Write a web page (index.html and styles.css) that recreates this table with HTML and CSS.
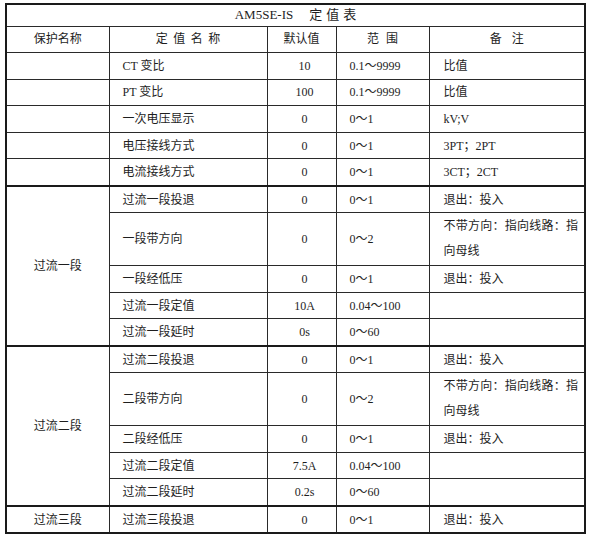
FILE: index.html
```html
<!DOCTYPE html>
<html lang="zh">
<head>
<meta charset="utf-8">
<link rel="stylesheet" href="styles.css">
<title>AM5SE-IS 定值表</title>
</head>
<body>
<table class="sheet">
  <colgroup>
    <col class="c1"><col class="c2"><col class="c3"><col class="c4"><col class="c5">
  </colgroup>
  <tr class="title-row"><td colspan="5" class="title">AM5SE-IS<span class="title-gap"></span><span class="sp-title">定值表</span></td></tr>
  <tr class="head">
    <td class="center">保护名称</td>
    <td class="center"><span class="sp-a">定值名称</span></td>
    <td class="center">默认值</td>
    <td class="center"><span class="sp-b">范围</span></td>
    <td class="center"><span class="sp-c">备注</span></td>
  </tr>
  <tr><td></td><td class="name">CT 变比</td><td class="val">10</td><td class="rng">0.1～9999</td><td class="note">比值</td></tr>
  <tr><td></td><td class="name">PT 变比</td><td class="val">100</td><td class="rng">0.1～9999</td><td class="note">比值</td></tr>
  <tr><td></td><td class="name">一次电压显示</td><td class="val">0</td><td class="rng">0～1</td><td class="note">kV;V</td></tr>
  <tr><td></td><td class="name">电压接线方式</td><td class="val">0</td><td class="rng">0～1</td><td class="note">3PT；2PT</td></tr>
  <tr><td></td><td class="name">电流接线方式</td><td class="val">0</td><td class="rng">0～1</td><td class="note">3CT；2CT</td></tr>

  <tr class="group"><td rowspan="5" class="center">过流一段</td><td class="name">过流一段投退</td><td class="val">0</td><td class="rng">0～1</td><td class="note">退出：投入</td></tr>
  <tr class="tall"><td class="name">一段带方向</td><td class="val">0</td><td class="rng">0～2</td><td class="note wrap">不带方向：指向线路：指向母线</td></tr>
  <tr><td class="name">一段经低压</td><td class="val">0</td><td class="rng">0～1</td><td class="note">退出：投入</td></tr>
  <tr><td class="name">过流一段定值</td><td class="val">10A</td><td class="rng">0.04～100</td><td class="note"></td></tr>
  <tr><td class="name">过流一段延时</td><td class="val">0s</td><td class="rng">0～60</td><td class="note"></td></tr>

  <tr class="group"><td rowspan="5" class="center">过流二段</td><td class="name">过流二段投退</td><td class="val">0</td><td class="rng">0～1</td><td class="note">退出：投入</td></tr>
  <tr class="tall"><td class="name">二段带方向</td><td class="val">0</td><td class="rng">0～2</td><td class="note wrap">不带方向：指向线路：指向母线</td></tr>
  <tr><td class="name">二段经低压</td><td class="val">0</td><td class="rng">0～1</td><td class="note">退出：投入</td></tr>
  <tr><td class="name">过流二段定值</td><td class="val">7.5A</td><td class="rng">0.04～100</td><td class="note"></td></tr>
  <tr><td class="name">过流二段延时</td><td class="val">0.2s</td><td class="rng">0～60</td><td class="note"></td></tr>

  <tr class="group"><td class="center">过流三段</td><td class="name">过流三段投退</td><td class="val">0</td><td class="rng">0～1</td><td class="note">退出：投入</td></tr>
</table>
</body>
</html>
```
FILE: styles.css
```css
html, body {
  margin: 0;
  padding: 0;
  background: #ffffff;
}

body {
  font-family: "Liberation Serif", "Noto Sans CJK SC", serif;
  font-size: 12px;
  color: #1e1e1e;
}

.sheet {
  margin: 3px 0 0 5px;
  width: 579px;
  table-layout: fixed;
  border-collapse: collapse;
  border: 2px solid #1a1a1a;
}

.c1 { width: 103px; }
.c2 { width: 158px; }
.c3 { width: 69px; }
.c4 { width: 93px; }
.c5 { width: 156px; }

.sheet td {
  border: 1px solid #2a2a2a;
  padding: 0;
  height: 25.6px;
  line-height: 16px;
  vertical-align: middle;
  white-space: nowrap;
}

.sheet .title-row td {
  height: 20.5px;
}

.title {
  text-align: center;
  font-size: 13px;
  padding-left: 4px;
}

.title-gap {
  display: inline-block;
  width: 16px;
}

.sp-title {
  letter-spacing: 4px;
  margin-right: -4px;
}

.center {
  text-align: center;
}

.sp-a {
  letter-spacing: 5.5px;
  margin-right: -5.5px;
}

.sp-b {
  letter-spacing: 7px;
  margin-right: -7px;
}

.sp-c {
  letter-spacing: 10px;
  margin-right: -10px;
}

.sheet .group td {
  border-top: 2px solid #1a1a1a;
  height: 25px;
}

.sheet .tall td {
  height: 52.2px;
}

.name {
  padding-left: 13px !important;
}

.val {
  text-align: center;
  padding-left: 6px !important;
}

.rng {
  padding-left: 13px !important;
}

.note {
  padding-left: 14px !important;
  padding-right: 6px !important;
}

.note.wrap {
  white-space: normal;
  line-height: 25px;
  text-align: justify;
}
```
